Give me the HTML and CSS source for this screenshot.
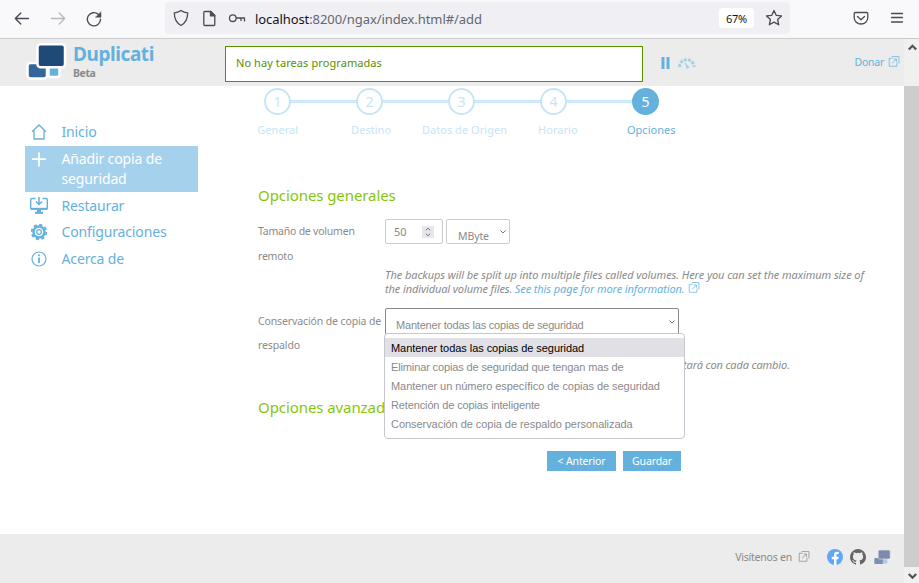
FILE: index.html
```html
<!DOCTYPE html>
<html lang="es">
<head>
<meta charset="utf-8">
<title>Duplicati</title>
<link rel="stylesheet" href="styles.css">
</head>
<body>
<svg class="defs" width="0" height="0">
  <symbol id="ext" viewBox="0 0 12 12"><path d="M4.500 2.500H.8v8.700h8.400V7M3.500 .6h7.900v7.600M4 8l4.700-4.700M5.700 3.300h3v3" fill="none" stroke="currentColor" stroke-width=".8"/></symbol>
</svg>
<div class="toolbar">
  <svg class="nav-icons" width="110" height="38" viewBox="0 0 110 38" fill="none" stroke="#4b4a55" stroke-width="1.400" stroke-linecap="round" stroke-linejoin="round">
    <path d="M28.500 18.500h-13M20.800 13l-5.500 5.500 5.500 5.500"/>
    <path d="M51.500 18.500h13M59.200 13l5.500 5.500-5.500 5.500" stroke="#b8b8bf"/>
    <path d="M98.500 14.500a6.600 6.600 0 1 0 2 4.700"/><path d="M101 12v5.200h-5.200z" fill="#4b4a55" stroke-width=".5"/>
  </svg>
  <div class="urlbar">
    <svg width="84" height="32" viewBox="0 0 84 32" fill="none" stroke="#4b4a55" stroke-width="1.300" stroke-linejoin="round">
      <path d="M16 8.500c2 1.500 4.300 2.200 6.700 2.300 0 5.500-1.700 10-6.700 12.700-5-2.700-6.700-7.200-6.700-12.700C11.700 10.700 14 10 16 8.500z"/>
      <path d="M39.800 9.500h6l4 4v9q0 1-1 1h-9q-1 0-1-1v-12q0-1 1-1z"/><path d="M45.500 9.500v4.300h4.300z" fill="#4b4a55"/>
      <circle cx="67.800" cy="16.200" r="3.300"/><path d="M71 16h8.500v3.500M76 16v3"/>
    </svg>
    <span class="url"><b>localhost</b>:8200/ngax/index.html#/add</span>
    <span class="zoom">67%</span>
    <svg class="star" width="18" height="18" viewBox="0 0 18 18" fill="none" stroke="#4b4a55" stroke-width="1.300" stroke-linejoin="round"><path d="M9 1.500l2.200 4.800 5.300.6-3.900 3.600 1.100 5.300L9 13.100l-4.700 2.700 1.100-5.300L1.500 6.900l5.300-.6z"/></svg>
  </div>
  <svg class="right-icons" width="60" height="38" viewBox="0 0 60 38" fill="none" stroke="#4b4a55" stroke-width="1.300" stroke-linecap="round" stroke-linejoin="round">
    <path d="M6.500 12.500h11q1.300 0 1.300 1.300v4a6.800 6.200 0 0 1-13.600 0v-4q0-1.300 1.300-1.300zM8.500 16.500l3.500 3.200 3.500-3.200"/>
    <path d="M42.500 13.500h11M42.500 17.500h11M42.500 22h11"/>
  </svg>
</div>
<div class="viewport">
  <div class="page">
    <header class="header">
      <svg class="logo" width="42" height="40" viewBox="0 0 42 40">
        <g stroke="#fff" stroke-width="2.500">
          <rect x="22.500" y="24" width="11" height="11" rx="2" fill="#65b1dd"/>
          <rect x="1.500" y="21" width="19.500" height="15.500" rx="3" fill="#346799"/>
          <rect x="11.500" y="2.200" width="27.500" height="23" rx="3" fill="#1f4977"/>
        </g>
      </svg>
      <div class="brand"><div class="name">Duplicati</div><div class="beta">Beta</div></div>
      <div class="status">No hay tareas programadas</div>
      <svg class="controls" width="36" height="14" viewBox="0 0 36 14">
        <path d="M2 1v12M7 1v12" stroke="#65b1dd" stroke-width="3"/>
        <g fill="none" stroke="#a6d0ea"><path d="M18.500 11a7.300 7.300 0 0 1 14.600 0" stroke-width="3" stroke-dasharray="3 1.200"/><path d="M24 7l2.500 4" stroke-width="1.300"/><circle cx="26.500" cy="11" r="1.200" fill="#a6d0ea"/></g>
      </svg>
      <a class="donate"><span>Donar</span> <svg class="ext" width="12" height="11"><use href="#ext"/></svg></a>
    </header>
    <div class="body">
      <nav class="menu">
        <a class="item"><svg width="20" height="20" viewBox="0 0 20 20" fill="none" stroke="currentColor" stroke-width="1.300"><path d="M3 9.800L10 3l7 6.800M5 8.500V17h10V8.500"/></svg><span>Inicio</span></a>
        <a class="item active"><svg width="20" height="20" viewBox="0 0 20 20" stroke="currentColor" stroke-width="1.700"><path d="M3 10.200h14M10 3.500v14"/></svg><span>Añadir copia de<br>seguridad</span></a>
        <a class="item"><svg width="20" height="20" viewBox="0 0 20 20" fill="none" stroke="currentColor"><path d="M6.500 2.500H3Q1.700 2.500 1.700 3.800v8Q1.700 13.100 3 13.100h14q1.300 0 1.300-1.300v-8Q18.300 2.500 17 2.500h-3.500" stroke-width="1.400"/><path d="M1.500 12.800h17" stroke-width="2"/><path d="M10 1v6.500M7 5.500l3 3 3-3" stroke-width="1.500"/><path d="M10 14v3" stroke-width="4"/><path d="M6 16.800h8" stroke-width="2.200"/></svg><span>Restaurar</span></a>
        <a class="item"><svg width="20" height="20" viewBox="0 0 20 20" fill="none" stroke="currentColor"><circle cx="10" cy="10" r="7.300" stroke-width="1.900" stroke-dasharray="3.200 2.530"/><circle cx="10" cy="10" r="5.500" stroke-width="2.400"/><circle cx="10" cy="10" r="2.300" stroke-width="1.300"/></svg><span>Configuraciones</span></a>
        <a class="item"><svg width="20" height="20" viewBox="0 0 20 20" fill="none" stroke="currentColor"><circle cx="10" cy="10" r="7" stroke-width="1.200"/><path d="M10 8.500V14M10 5.500v1.700" stroke-width="1.800"/></svg><span>Acerca de</span></a>
      </nav>
      <main class="content">
        <div class="steps">
          <span class="dot">1</span><i></i><span class="dot">2</span><i></i><span class="dot">3</span><i></i><span class="dot">4</span><i></i><span class="dot on">5</span>
        </div>
        <div class="labels"><span>General</span><span>Destino</span><span>Datos de Origen</span><span>Horario</span><span class="on">Opciones</span></div>
        <h2>Opciones generales</h2>
        <div class="row size">
          <label>Tamaño de volumen<br>remoto</label>
          <div class="field">
            <div class="inputs">
              <span class="number">50<svg width="12" height="12" viewBox="0 0 12 12" fill="none" stroke="#77767f"><path d="M3.800 4.300L6 2.200l2.200 2.100M3.800 7.700L6 9.800l2.200-2.100"/></svg></span>
              <span class="select unit">MByte<svg width="8" height="6" viewBox="0 0 8 6" fill="none" stroke="#77767f"><path d="M1.500 1.500L4 4l2.500-2.500"/></svg></span>
            </div>
            <p class="hint"><span>The backups will be split up into multiple files called volumes. Here you can set the maximum size of</span><br><span class="more">the individual volume files. <a>See this page for more information. <svg class="ext" width="12" height="11"><use href="#ext"/></svg></a></span></p>
          </div>
        </div>
        <div class="row keep">
          <label>Conservación de copia de<br>respaldo</label>
          <div class="field">
            <div class="select policy">Mantener todas las copias de seguridad<svg width="8" height="6" viewBox="0 0 8 6" fill="none" stroke="#77767f"><path d="M1.500 1.500L4 4l2.500-2.500"/></svg>
              <ul class="options">
                <li class="selected">Mantener todas las copias de seguridad</li>
                <li class="tight">Eliminar copias de seguridad que tengan mas de</li>
                <li>Mantener un número específico de copias de seguridad</li>
                <li class="tight">Retención de copias inteligente</li>
                <li>Conservación de copia de respaldo personalizada</li>
              </ul>
            </div>
            <p class="note">tará con cada cambio.</p>
          </div>
        </div>
        <h2 class="advanced">Opciones avanzadas</h2>
        <div class="buttons"><span class="btn prev">&lt; Anterior</span><span class="btn save">Guardar</span></div>
      </main>
    </div>
    <footer class="footer">
      <span class="visit">Visítenos en</span> <svg class="ext" width="12" height="11"><use href="#ext"/></svg>
      <svg class="social" width="64" height="18" viewBox="0 0 64 18">
        <circle cx="8" cy="9" r="8" fill="#5fa8f8"/><path d="M7 17v-5.800H4.800V8.800H7V7q0-3.200 3-3.200 1.200 0 1.800.2v2.100h-1.200q-1.200 0-1.200 1.200v1.500h2.300l-.4 2.400H9.400V17z" fill="#fff"/>
        <path transform="translate(23 1)" fill="#666" d="M8 0a8 8 0 0 0-2.530 15.590c.4.070.55-.17.55-.38v-1.490c-2.230.48-2.700-.95-2.700-.95-.36-.92-.89-1.170-.89-1.170-.73-.5.060-.49.060-.49.800.060 1.230.83 1.230.83.710 1.220 1.870.87 2.330.66.070-.52.280-.87.500-1.070-1.770-.2-3.640-.89-3.640-3.950 0-.87.310-1.590.82-2.150-.08-.2-.36-1.020.08-2.120 0 0 .67-.21 2.200.82a7.600 7.600 0 0 1 4 0c1.530-1.030 2.200-.82 2.200-.82.440 1.100.160 1.920.08 2.120.51.560.82 1.280.82 2.150 0 3.070-1.870 3.750-3.650 3.950.29.250.54.730.54 1.480v2.200c0 .21.140.46.550.38A8 8 0 0 0 8 0z"/>
        <rect x="47.300" y="10" width="9" height="6" rx="1" fill="#7f8fb0"/><rect x="55.800" y="10.500" width="4.500" height="5" fill="#a9cbe8"/><rect x="51.200" y="2" width="12" height="9" rx="1.500" fill="#7c8aab" stroke="#ececec" stroke-width=".6"/>
      </svg>
    </footer>
  </div>
  <div class="scrollbar">
    <svg width="15" height="16" viewBox="0 0 15 16" fill="none" stroke="#555" stroke-width="2.300"><path d="M4.800 10.500l3.700-3.700 3.700 3.700"/></svg>
    <div class="thumb"></div>
    <svg width="15" height="16" viewBox="0 0 15 16" fill="none" stroke="#555" stroke-width="2.300"><path d="M4.800 7l3.700 3.700L12.200 7"/></svg>
  </div>
</div>
</body>
</html>
```
FILE: styles.css
```css
* { box-sizing: border-box; }
body { margin: 0; width: 919px; height: 583px; overflow: hidden; display: flex; flex-direction: column; background: #fff; color: #8a8a8a; font: 11px "Noto Sans", sans-serif; }
svg { display: block; flex: none; }
.defs { position: absolute; }
.toolbar { height: 39px; background: #f9f9fb; border-bottom: 1px solid #ccc; display: flex; }
.nav-icons { margin-right: 55px; }
.urlbar { width: 625px; height: 32px; margin-top: 2px; background: #f0f0f4; border-radius: 4px; display: flex; align-items: center; }
.url { flex: 1; margin-left: 6px; padding-top: 1px; font-size: 13px; letter-spacing: -.08px; color: #66656f; }
.url b { font-weight: normal; color: #15141a; }
.zoom { width: 35px; height: 20px; background: #fff; border-radius: 3px; font-size: 11px; line-height: 21px; letter-spacing: -.2px; text-align: center; color: #15141a; }
.star { margin: 0 7px 0 11px; }
.right-icons { margin-left: 59px; }
.viewport { flex: 1; display: flex; }
.page { width: 904px; display: flex; flex-direction: column; }
.header { height: 47px; background: #ececec; display: flex; }
.logo { margin: 3px 5px 0 26px; }
.brand { width: 152px; padding-top: 3px; font-weight: bold; }
.name { font-size: 19px; line-height: 24px; letter-spacing: -.42px; color: #65b1dd; }
.beta { font-size: 10.500px; line-height: 15px; letter-spacing: -.4px; }
.status { width: 418px; height: 36px; margin-top: 7px; border: 1px solid #5a9000; background: #fff; padding-left: 10px; line-height: 32px; letter-spacing: .08px; color: #5a9000; }
.controls { margin: 17px 0 0 18px; }
.donate { margin: 15px 4px 0 auto; display: flex; align-items: center; gap: 4px; height: 16px; font-size: 10.500px; letter-spacing: -.25px; color: #65b1dd; }
.donate svg { margin-top: -2px; }
.body { flex: 1; display: flex; }
.menu { width: 173px; margin: 33px 0 0 25px; color: #65b1dd; font-size: 14px; line-height: 20px; }
.item { display: flex; gap: 12px; padding: 3px 0 3px 4px; margin-bottom: .6px; letter-spacing: -.14px; }
.item span { margin-left: .5px; white-space: nowrap; }
.item.active { background: #a6d1ec; color: #fff; margin-bottom: 1px; }
.content { margin-left: 60px; width: 640px; }
.steps { display: flex; align-items: center; margin: 2px 0 0 6px; }
.dot { width: 27px; height: 27px; border: 2px solid #c7e5f6; border-radius: 50%; text-align: center; font-size: 14px; line-height: 23px; color: #c7e5f6; }
.steps i { width: 65px; height: 3px; border: solid #c7e5f6; border-width: 1px 0; background: #d8f2fd; }
.dot.on { background: #65b1dd; border-color: #65b1dd; color: #fff; }
.labels { display: grid; grid-template-columns: repeat(5, 93.400px); margin: 7px 0 0 -27px; text-align: center; line-height: 16px; letter-spacing: .04px; color: #c7e5f6; }
.labels .on { color: #65b1dd; }
h2 { margin: 47px 0 0; font-size: 15px; font-weight: normal; line-height: 20px; letter-spacing: -.08px; color: #86c60b; }
.row { display: flex; }
label { width: 127px; font-size: 10.500px; line-height: 24.500px; letter-spacing: -.22px; white-space: nowrap; }
.size { margin-top: 14px; height: 90px; }
.inputs { display: flex; gap: 3px; }
.number, .select { border: 1px solid #ccc; border-radius: 2px; background: #fff; display: flex; justify-content: space-between; }
.number { width: 58px; height: 25px; padding: 0 8px; align-items: center; }
.number svg { background: #e6e6ec; }
.unit { width: 64px; height: 25px; padding: 9px 2px 0 11px; font-size: 10.500px; letter-spacing: -.1px; }
.hint { margin: 24px 0 0; line-height: 14px; letter-spacing: -.07px; font-style: italic; white-space: nowrap; }
.hint .more { letter-spacing: -.11px; }
.hint a { color: #65b1dd; }
.hint svg { display: inline-block; vertical-align: 0; margin-left: 1px; }
.keep { height: 88px; }
.keep label { line-height: 24px; letter-spacing: -.12px; }
.policy { position: relative; width: 294px; height: 27px; margin-top: -1px; padding: 7px 2px 0 10px; border-color: #888; font-family: "Liberation Sans", sans-serif; line-height: 18px; letter-spacing: -.2px; }
.policy > svg { margin-top: 3px; }
.options { position: absolute; left: -2px; top: 24px; width: 301px; height: 106px; margin: 0; padding: 4px 0; list-style: none; background: #fff; border: 1px solid #c6c6ce; border-radius: 4px; line-height: 19px; letter-spacing: -.05px; }
.options li { height: 19px; line-height: 20px; padding-left: 6px; white-space: nowrap; }
.options .tight { letter-spacing: -.13px; }
.options .selected { background: #e0e0e6; color: #000; }
.note { margin: 22px 0 0 298px; line-height: 16px; letter-spacing: -.12px; font-style: italic; }
.advanced { margin: 0; }
.buttons { display: flex; gap: 7px; margin: 34px 0 0 289px; }
.btn { height: 20px; line-height: 20px; font-size: 10.500px; letter-spacing: -.15px; background: #65b1dd; color: #fff; text-align: center; }
.prev { width: 69px; }
.save { width: 58px; }
.footer { height: 49px; background: #ececec; display: flex; align-items: center; justify-content: flex-end; padding: 0 13px 3px 0; }
.visit { font-size: 10.500px; letter-spacing: -.22px; }
.footer .ext { margin: -2px 0 0 6px; }
.social { margin-left: 17px; }
.scrollbar { width: 15px; background: #f0f0f0; display: flex; flex-direction: column; }
.scrollbar .thumb { margin: 31px 0 0; flex: 1; background: #cdcdcd; }
```
